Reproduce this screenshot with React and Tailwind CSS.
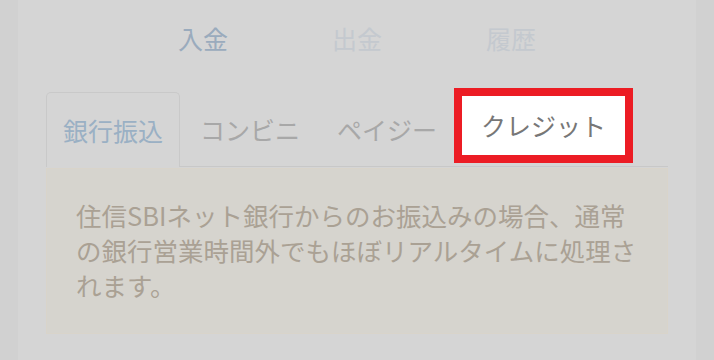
export default function App() {
  const font = { fontFamily: '"Noto Sans CJK JP", "Noto Sans", sans-serif' };

  return (
    <div className="min-h-screen bg-[#d1d1d1] px-[18px]" style={font}>
      <div className="h-[360px] bg-[#d5d5d5] px-[28px]">

        {/* top tabs */}
        <div className="h-[88px] pt-[25px]">
          <div className="mx-auto grid w-[462px] grid-cols-3 text-center text-[25px] leading-[26px]">
            <span className="text-[#9aabbd]">入金</span>
            <span className="text-[#c4c9cf]">出金</span>
            <span className="text-[#c4c9cf]">履歴</span>
          </div>
        </div>

        {/* payment tabs */}
        <div className="flex items-end border-b border-[#c8c8c8] text-[25px] leading-none">
          <div className="-mb-px flex h-[75px] items-center rounded-t-[5px] border border-b-0 border-[#c9c9c9] bg-[#d5d5d5] px-[16px] text-[#9ab0c4]">
            銀行振込
          </div>
          <div className="flex h-[74px] items-center px-[20px] text-[#a8a8a8]">
            コンビニ
          </div>
          <div className="flex h-[74px] items-center px-[17px] text-[#a8a8a8]">
            ペイジー
          </div>
          <div className="mb-[3px] flex h-[75px] items-center border-[8px] border-[#ec1c24] bg-white px-[19px] text-[#777777]">
            クレジット
          </div>
        </div>

        {/* description */}
        <div className="mt-px h-[166px] border border-[#d9d4ca] bg-[#d6d4ce] px-[29px] pt-[28px] text-[25.5px] leading-[35px] text-[#aaa194] whitespace-nowrap">
          住信SBIネット銀行からのお振込みの場合、通常
          <br />
          の銀行営業時間外でもほぼリアルタイムに処理さ
          <br />
          れます。
        </div>
      </div>
    </div>
  );
}
